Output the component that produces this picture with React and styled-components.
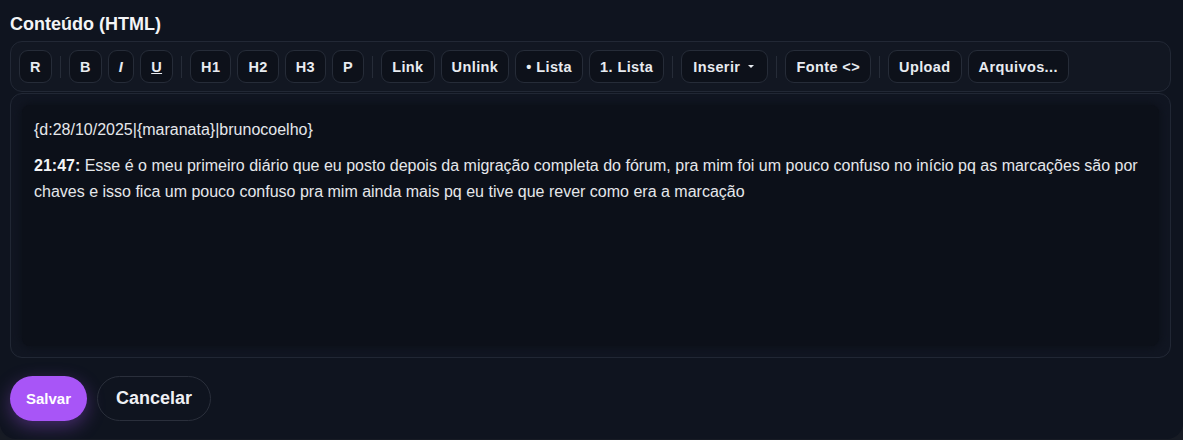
import React from 'react';
import styled, { createGlobalStyle } from 'styled-components';

const GlobalStyle = createGlobalStyle`
  html, body {
    margin: 0;
    padding: 0;
    background: #171b24;
  }
  body {
    font-family: "Liberation Sans", Arial, sans-serif;
  }
`;

const Panel = styled.div`
  box-sizing: border-box;
  width: 1183px;
  height: 439px;
  padding: 14px 12px 0 10px;
  background: #0f141f;
  border-radius: 0 0 16px 16px;
`;

const Label = styled.div`
  font-size: 18px;
  font-weight: 700;
  line-height: 20px;
  color: #f3f4f6;
  margin-bottom: 7px;
`;

const Toolbar = styled.div`
  display: flex;
  align-items: center;
  gap: 6px;
  padding: 8px 8px;
  background: #121722;
  border: 1px solid #222835;
  border-radius: 12px;
`;

const ToolButton = styled.button`
  box-sizing: border-box;
  height: 33px;
  padding: 0 ${(p) => (p.menu ? '13px' : '10px')} 0 ${(p) => (p.menu ? '11px' : '10px')};
  display: inline-flex;
  align-items: center;
  justify-content: center;
  gap: 8px;
  background: #0d111a;
  border: 1px solid #262c38;
  border-radius: 9px;
  color: #e8ebf0;
  font-family: "Liberation Sans", Arial, sans-serif;
  font-size: 14.5px;
  letter-spacing: 0.4px;
  font-weight: 700;
  font-style: ${(p) => (p.italic ? 'italic' : 'normal')};
  text-decoration: ${(p) => (p.underline ? 'underline' : 'none')};
  cursor: pointer;
`;

const Caret = styled.span`
  width: 0;
  height: 0;
  border-left: 3px solid transparent;
  border-right: 3px solid transparent;
  border-top: 3px solid #e8ebf0;
`;

const Divider = styled.span`
  width: 1px;
  height: 22px;
  margin: 0 2px;
  background: #262c38;
`;

const Editor = styled.div`
  box-sizing: border-box;
  height: 265px;
  margin-top: 1px;
  padding: 11px;
  background: #111622;
  border: 1px solid #222835;
  border-radius: 12px;
`;

const EditorBody = styled.div`
  box-sizing: border-box;
  height: 100%;
  padding: 12px 12px;
  background: #0c1019;
  border-radius: 8px;
  box-shadow: 0 0 8px 2px #0c1019;
  color: #e5e7eb;
  font-size: 16px;
  line-height: 26px;

  p {
    margin: 0 0 10px;
  }
  strong {
    font-weight: 700;
    color: #f3f4f6;
  }
`;

const Actions = styled.div`
  display: flex;
  align-items: center;
  gap: 10px;
  margin-top: 18px;
`;

const PrimaryButton = styled.button`
  height: 45px;
  padding: 0 16px;
  border: none;
  border-radius: 23px;
  background: #a855f7;
  color: #ffffff;
  font-family: "Liberation Sans", Arial, sans-serif;
  font-size: 15px;
  font-weight: 700;
  box-shadow: 0 6px 18px rgba(168, 85, 247, 0.35);
  cursor: pointer;
`;

const GhostButton = styled.button`
  height: 45px;
  padding: 0 18px;
  border: 1px solid #2a2f3b;
  border-radius: 23px;
  background: transparent;
  color: #eef0f4;
  font-family: "Liberation Sans", Arial, sans-serif;
  font-size: 18px;
  font-weight: 700;
  cursor: pointer;
`;

const groups = [
  [{ label: 'R' }],
  [{ label: 'B' }, { label: 'I', italic: true }, { label: 'U', underline: true }],
  [{ label: 'H1' }, { label: 'H2' }, { label: 'H3' }, { label: 'P' }],
  [{ label: 'Link' }, { label: 'Unlink' }, { label: '• Lista' }, { label: '1. Lista' }],
  [{ label: 'Inserir', menu: true }],
  [{ label: 'Fonte <>' }],
  [{ label: 'Upload' }, { label: 'Arquivos...' }],
];

export default function App() {
  return (
    <>
      <GlobalStyle />
      <Panel>
        <Label>Conteúdo (HTML)</Label>
        <Toolbar>
          {groups.map((group, gi) => (
            <React.Fragment key={gi}>
              {gi > 0 && <Divider />}
              {group.map((b) => (
                <ToolButton
                  key={b.label}
                  italic={b.italic}
                  underline={b.underline}
                  menu={b.menu}
                >
                  {b.label}
                  {b.menu && <Caret />}
                </ToolButton>
              ))}
            </React.Fragment>
          ))}
        </Toolbar>
        <Editor>
          <EditorBody>
            <p>{'{d:28/10/2025|{maranata}|brunocoelho}'}</p>
            <p>
              <strong>21:47:</strong> Esse é o meu primeiro diário que eu posto depois da
              migração completa do fórum, pra mim foi um pouco confuso no início pq as
              marcações são por chaves e isso fica um pouco confuso pra mim ainda mais pq eu
              tive que rever como era a marcação
            </p>
          </EditorBody>
        </Editor>
        <Actions>
          <PrimaryButton>Salvar</PrimaryButton>
          <GhostButton>Cancelar</GhostButton>
        </Actions>
      </Panel>
    </>
  );
}
